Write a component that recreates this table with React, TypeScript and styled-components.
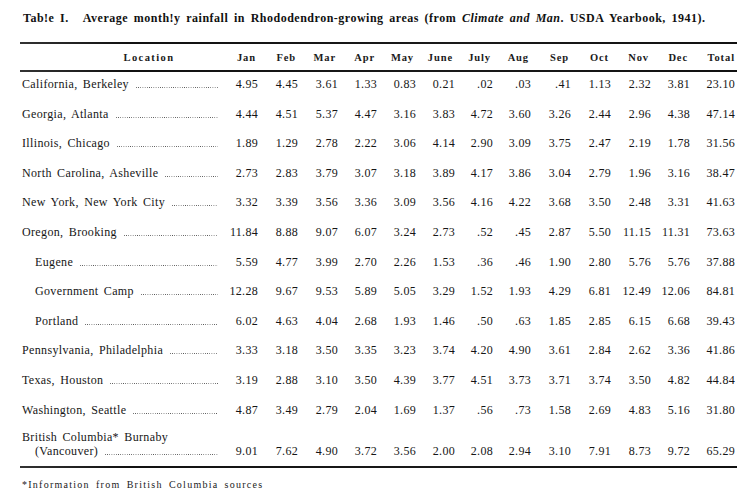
import React from "react";
import styled, { createGlobalStyle } from "styled-components";

const Global = createGlobalStyle`
  html, body { margin: 0; padding: 0; background: #fff; }
  body { font-family: "Liberation Serif", "Times New Roman", serif; color: #161616; }
`;

const Page = styled.div`
  width: 753px;
  height: 500px;
  padding: 11px 16px 0 20px;
  box-sizing: border-box;
  overflow: hidden;
`;

const Title = styled.h1`
  display: flex;
  gap: 14px;
  margin: 0 0 0 3px;
  font-size: 12px;
  line-height: 14px;
  font-weight: bold;
  letter-spacing: 0.5px;
  word-spacing: 2.2px;
  white-space: nowrap;
  color: #111;
  em { font-style: italic; }
`;

const Rule = styled.div<{ $top: number }>`
  width: 717px;
  height: 2px;
  margin-top: ${(p) => p.$top}px;
  background: linear-gradient(to right, #333 0%, #111 15%, #1a1a1a 60%, #111 100%);
`;

const COLS = "198px 40px 40px 40px 39px 39px 39px 38px 38px 40px 40px 40px 39px 45px";

const HeaderRow = styled.div`
  display: grid;
  grid-template-columns: ${COLS};
  height: 26px;
  align-items: center;
  font-size: 10.5px;
  font-weight: bold;
  letter-spacing: 0.9px;
  color: #1a1a1a;
`;

const HeadCell = styled.div<{ $align?: "center" | "right"; $pad?: number; $lead?: number }>`
  text-align: ${(p) => p.$align ?? "right"};
  padding-right: ${(p) => p.$pad ?? 2}px;
  padding-left: ${(p) => p.$lead ?? 0}px;
  white-space: nowrap;
`;

const LocationHead = styled(HeadCell)`
  letter-spacing: 1.4px;
`;

const Row = styled.div<{ $top?: number; $bottom?: number }>`
  display: grid;
  grid-template-columns: ${COLS};
  align-items: end;
  padding-top: ${(p) => p.$top ?? 5}px;
  padding-bottom: ${(p) => p.$bottom ?? 10.6}px;
  font-size: 12px;
  line-height: 14px;
`;

const LocCell = styled.div<{ $indent?: boolean }>`
  display: flex;
  align-items: flex-end;
  padding-left: ${(p) => (p.$indent ? 15 : 2)}px;
  letter-spacing: 0.35px;
  word-spacing: 2px;
  white-space: nowrap;
`;

const LocText = styled.span`
  display: block;
`;

const Leader = styled.span`
  flex: 1;
  height: 1px;
  margin: 0 0 3px 7px;
  background-image: linear-gradient(to right, #555 1px, transparent 1px);
  background-size: 2.2px 1px;
  background-repeat: repeat-x;
`;

const Num = styled.div`
  text-align: right;
  letter-spacing: 0.3px;
  white-space: nowrap;
`;

const Footnote = styled.p`
  margin: 11px 0 0 2px;
  font-size: 10px;
  line-height: 12px;
  letter-spacing: 1.25px;
  word-spacing: 2.5px;
  color: #222;
`;

const TwoLine = styled.div`
  display: flex;
  flex-direction: column;
  padding-left: 2px;
  letter-spacing: 0.35px;
  word-spacing: 2px;
  white-space: nowrap;
`;

const SecondLine = styled.div`
  display: flex;
  align-items: flex-end;
  padding-left: 13px;
`;

type Entry = {
  name: string;
  second?: string;
  indent?: boolean;
  values: string[];
};

const MONTHS = ["Jan", "Feb", "Mar", "Apr", "May", "June", "July", "Aug", "Sep", "Oct", "Nov", "Dec", "Total"];

const DATA: Entry[] = [
  { name: "California, Berkeley", values: "4.95 4.45 3.61 1.33 0.83 0.21 .02 .03 .41 1.13 2.32 3.81 23.10".split(" ") },
  { name: "Georgia, Atlanta", values: "4.44 4.51 5.37 4.47 3.16 3.83 4.72 3.60 3.26 2.44 2.96 4.38 47.14".split(" ") },
  { name: "Illinois, Chicago", values: "1.89 1.29 2.78 2.22 3.06 4.14 2.90 3.09 3.75 2.47 2.19 1.78 31.56".split(" ") },
  { name: "North Carolina, Asheville", values: "2.73 2.83 3.79 3.07 3.18 3.89 4.17 3.86 3.04 2.79 1.96 3.16 38.47".split(" ") },
  { name: "New York, New York City", values: "3.32 3.39 3.56 3.36 3.09 3.56 4.16 4.22 3.68 3.50 2.48 3.31 41.63".split(" ") },
  { name: "Oregon, Brooking", values: "11.84 8.88 9.07 6.07 3.24 2.73 .52 .45 2.87 5.50 11.15 11.31 73.63".split(" ") },
  { name: "Eugene", indent: true, values: "5.59 4.77 3.99 2.70 2.26 1.53 .36 .46 1.90 2.80 5.76 5.76 37.88".split(" ") },
  { name: "Government Camp", indent: true, values: "12.28 9.67 9.53 5.89 5.05 3.29 1.52 1.93 4.29 6.81 12.49 12.06 84.81".split(" ") },
  { name: "Portland", indent: true, values: "6.02 4.63 4.04 2.68 1.93 1.46 .50 .63 1.85 2.85 6.15 6.68 39.43".split(" ") },
  { name: "Pennsylvania, Philadelphia", values: "3.33 3.18 3.50 3.35 3.23 3.74 4.20 4.90 3.61 2.84 2.62 3.36 41.86".split(" ") },
  { name: "Texas, Houston", values: "3.19 2.88 3.10 3.50 4.39 3.77 4.51 3.73 3.71 3.74 3.50 4.82 44.84".split(" ") },
  { name: "Washington, Seattle", values: "4.87 3.49 2.79 2.04 1.69 1.37 .56 .73 1.58 2.69 4.83 5.16 31.80".split(" ") },
  { name: "British Columbia* Burnaby", second: "(Vancouver)", values: "9.01 7.62 4.90 3.72 3.56 2.00 2.08 2.94 3.10 7.91 8.73 9.72 65.29".split(" ") },
];

export default function App() {
  return (
    <>
      <Global />
      <Page>
        <Title>
          <span>Tab!e I.</span>
          <span>
            Average month!y rainfall in Rhododendron-growing areas (from <em>Climate and Man</em>. USDA Yearbook, 1941).
          </span>
        </Title>
        <Rule $top={17} />
        <HeaderRow>
          <LocationHead $align="center" $pad={0} $lead={60}>Location</LocationHead>
          {MONTHS.map((m, i) => (
            <HeadCell key={m} $pad={i === MONTHS.length - 1 ? 0 : 2}>{m}</HeadCell>
          ))}
        </HeaderRow>
        <Rule $top={0} />
        {DATA.map((d, idx) => {
          const last = idx === DATA.length - 1;
          return (
            <Row key={d.name} $top={last ? 3 : 5} $bottom={last ? 8 : 10.6}>
              {d.second ? (
                <TwoLine>
                  <LocText>{d.name}</LocText>
                  <SecondLine>
                    <LocText>{d.second}</LocText>
                    <Leader />
                  </SecondLine>
                </TwoLine>
              ) : (
                <LocCell $indent={d.indent}>
                  <LocText>{d.name}</LocText>
                  <Leader />
                </LocCell>
              )}
              {d.values.map((v, i) => (
                <Num key={i}>{v}</Num>
              ))}
            </Row>
          );
        })}
        <Rule $top={0} />
        <Footnote>*Information from British Columbia sources</Footnote>
      </Page>
    </>
  );
}
